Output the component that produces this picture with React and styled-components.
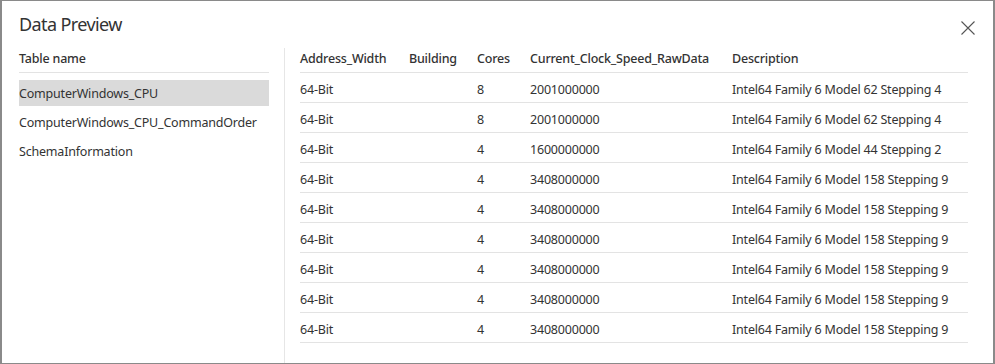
import React from "react";
import styled, { createGlobalStyle } from "styled-components";

const Global = createGlobalStyle`
  html, body { margin: 0; padding: 0; background: #fff; }
  body { font-family: "Noto Sans", "Open Sans", sans-serif; color: #333; }
`;

const Frame = styled.div`
  box-sizing: border-box;
  width: 995px;
  height: 364px;
  border: 1px solid #8a8a8a;
  border-left-width: 2px;
  border-right-width: 2px;
  background: #fff;
  display: flex;
  flex-direction: column;
  overflow: hidden;
`;

const TitleBar = styled.div`
  display: flex;
  align-items: center;
  justify-content: space-between;
  height: 46px;
  padding: 0 17px 0 17px;
  flex: none;
`;

const Title = styled.h1`
  margin: 0;
  font-size: 18px;
  letter-spacing: -0.6px;
  font-weight: 400;
  color: #333;
  line-height: 46px;
`;

const CloseButton = styled.button`
  border: none;
  background: none;
  padding: 0;
  width: 16px;
  height: 16px;
  display: flex;
  align-items: center;
  justify-content: center;
  margin-top: 7px;
  margin-right: 0;
`;

const Body = styled.div`
  display: flex;
  flex: 1;
  min-height: 0;
`;

const Sidebar = styled.div`
  width: 250px;
  margin-left: 17px;
  flex: none;
`;

const textStyle = `
  font-size: 12.5px;
  letter-spacing: -0.2px;
  color: #333;
  white-space: nowrap;
`;

const SideHeader = styled.div`
  ${textStyle}
  height: 25px;
  line-height: 24px;
  font-weight: 500;
  border-bottom: 1px solid #e3e3e3;
  margin-bottom: 7px;
`;

const SideList = styled.div`
  display: flex;
  flex-direction: column;
  gap: 3px;
`;

const SideItem = styled.div`
  ${textStyle}
  height: 26px;
  line-height: 28px;
  background: ${(p) => (p.$selected ? "#dadada" : "transparent")};
`;

const Divider = styled.div`
  width: 1px;
  background: #e6e6e6;
  margin: 1px 15px 0 15px;
  flex: none;
`;

const Grid = styled.div`
  display: grid;
  grid-template-columns: 109px 68px 53px 202px 236px;
  align-content: start;
`;

const HeadCell = styled.div`
  ${textStyle}
  height: 25px;
  line-height: 24px;
  font-weight: 500;
  border-bottom: 1px solid #e3e3e3;
`;

const Cell = styled.div`
  ${textStyle}
  height: 29px;
  line-height: 34px;
  border-bottom: 1px solid #e3e3e3;
`;

const columns = ["Address_Width", "Building", "Cores", "Current_Clock_Speed_RawData", "Description"];

const rows = [
  ["64-Bit", "", "8", "2001000000", "Intel64 Family 6 Model 62 Stepping 4"],
  ["64-Bit", "", "8", "2001000000", "Intel64 Family 6 Model 62 Stepping 4"],
  ["64-Bit", "", "4", "1600000000", "Intel64 Family 6 Model 44 Stepping 2"],
  ["64-Bit", "", "4", "3408000000", "Intel64 Family 6 Model 158 Stepping 9"],
  ["64-Bit", "", "4", "3408000000", "Intel64 Family 6 Model 158 Stepping 9"],
  ["64-Bit", "", "4", "3408000000", "Intel64 Family 6 Model 158 Stepping 9"],
  ["64-Bit", "", "4", "3408000000", "Intel64 Family 6 Model 158 Stepping 9"],
  ["64-Bit", "", "4", "3408000000", "Intel64 Family 6 Model 158 Stepping 9"],
  ["64-Bit", "", "4", "3408000000", "Intel64 Family 6 Model 158 Stepping 9"],
];

const tables = ["ComputerWindows_CPU", "ComputerWindows_CPU_CommandOrder", "SchemaInformation"];

export default function App() {
  return (
    <>
      <Global />
      <Frame>
        <TitleBar>
          <Title>Data Preview</Title>
          <CloseButton aria-label="Close">
            <svg width="14" height="14" viewBox="0 0 14 14">
              <path d="M0.5 0.5 L13.5 13.5 M13.5 0.5 L0.5 13.5" stroke="#555" strokeWidth="1.1" fill="none" />
            </svg>
          </CloseButton>
        </TitleBar>
        <Body>
          <Sidebar>
            <SideHeader>Table name</SideHeader>
            <SideList>
              {tables.map((t, i) => (
                <SideItem key={t} $selected={i === 0}>{t}</SideItem>
              ))}
            </SideList>
          </Sidebar>
          <Divider />
          <Grid>
            {columns.map((c) => (
              <HeadCell key={c}>{c}</HeadCell>
            ))}
            {rows.map((r, ri) =>
              r.map((v, ci) => <Cell key={ri + "-" + ci}>{v}</Cell>)
            )}
          </Grid>
        </Body>
      </Frame>
    </>
  );
}
